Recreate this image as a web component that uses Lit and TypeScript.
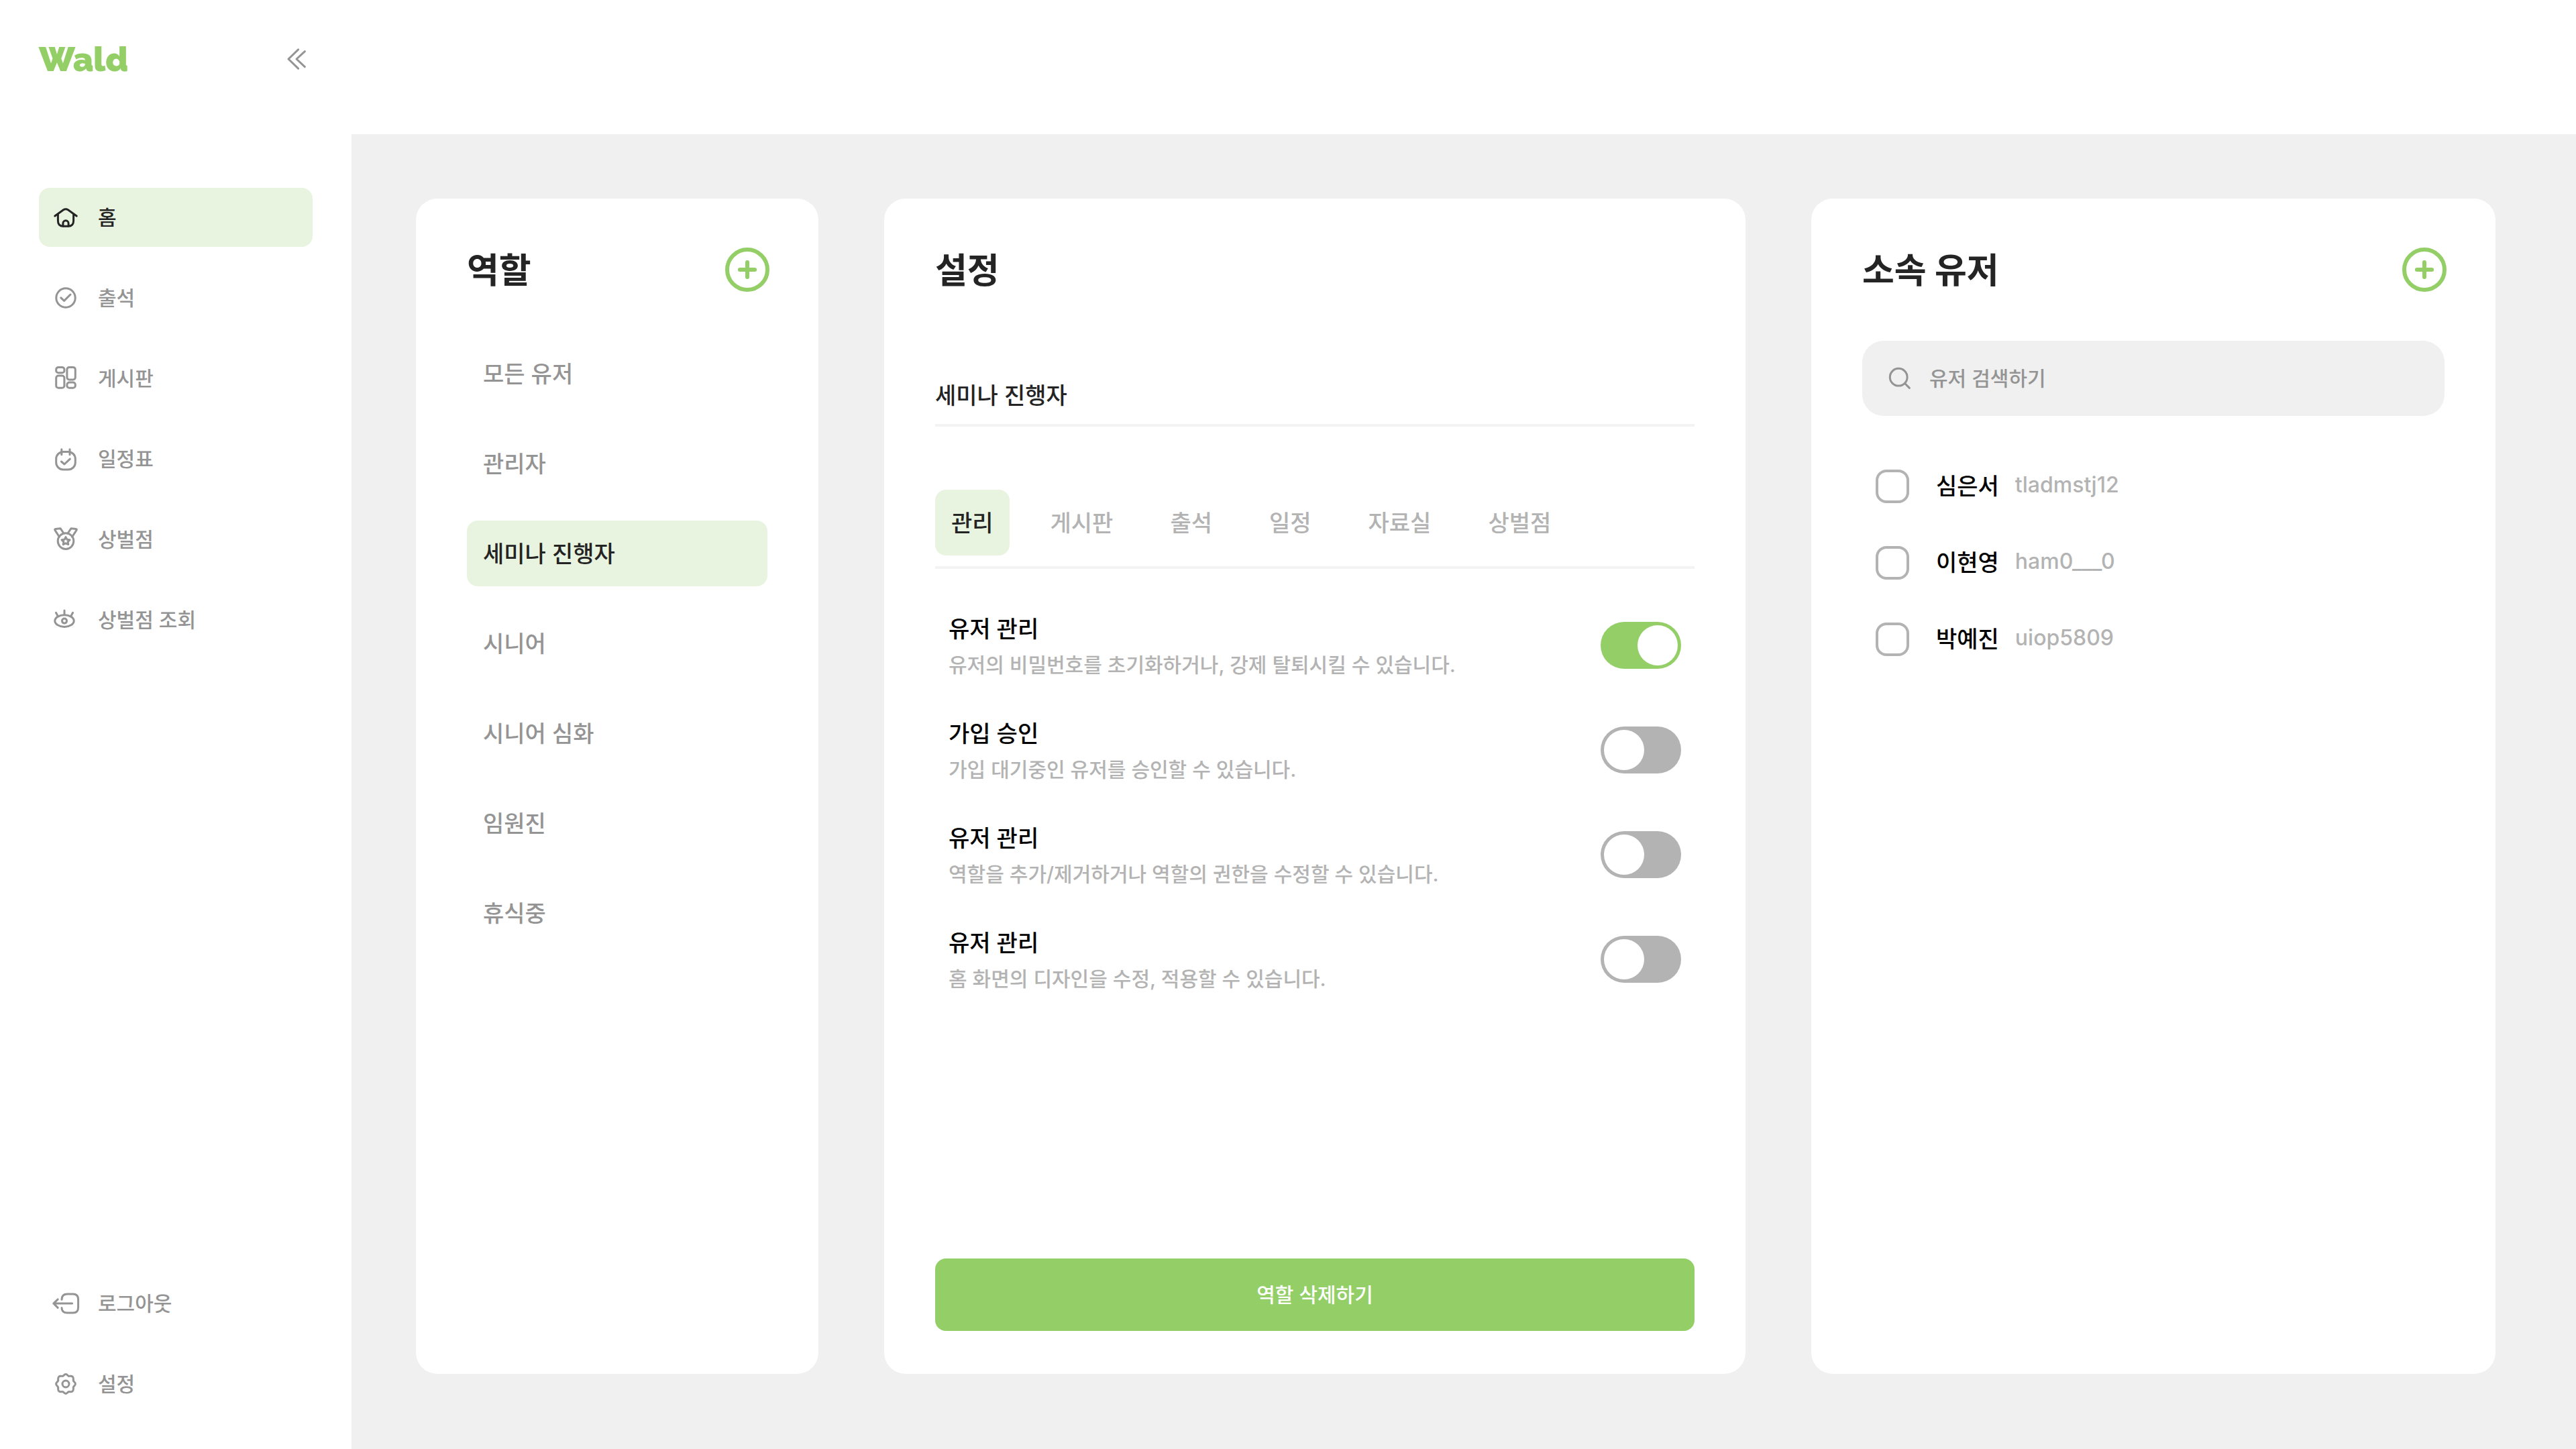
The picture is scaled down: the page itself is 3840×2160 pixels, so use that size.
import { LitElement, html, css, svg, nothing, TemplateResult } from "lit";
import { customElement, property, state } from "lit/decorators.js";
import { classMap } from "lit/directives/class-map.js";

const reset = css`
  *,
  *::before,
  *::after {
    box-sizing: border-box;
  }
  button,
  input {
    margin: 0;
    padding: 0;
    border: 0;
    background: none;
    color: inherit;
    font: inherit;
    outline-offset: 4px;
  }
  button {
    cursor: pointer;
  }
  a {
    color: inherit;
    text-decoration: none;
  }
  ul {
    margin: 0;
    padding: 0;
    list-style: none;
  }
  svg {
    display: block;
    fill: none;
    stroke: currentColor;
    stroke-linecap: round;
    stroke-linejoin: round;
    overflow: visible;
  }
`;

/* Every icon is drawn on a 40 x 40 grid. */
const icons: Record<string, TemplateResult> = {
  home: svg`<path d="M3.8 18 16.6 8.8Q20 6.6 23.4 8.8L36.2 18"/>
    <path d="M8.4 15.5V25.3Q8.4 33.3 16.4 33.3H23.6Q31.6 33.3 31.6 25.3V15.5"/>
    <path d="M15.9 33V28.9a4.1 4.1 0 0 1 8.2 0V33"/>`,
  check: svg`<circle cx="20" cy="20" r="14.2"/><path d="M12.8 19.8 17.6 24.4 27 15"/>`,
  board: svg`<rect x="5.7" y="3.4" width="12.2" height="8.4" rx="3.4"/>
    <rect x="5.7" y="16" width="12.2" height="18.3" rx="3.4"/>
    <rect x="21.9" y="3.4" width="12.4" height="18.6" rx="3.4"/>
    <rect x="21.9" y="26" width="12.4" height="8.3" rx="3.4"/>`,
  calendar: svg`<rect x="5.7" y="9.6" width="28.6" height="26.4" rx="10.5"/>
    <path d="M13.8 5.8V13.8M26 5.8V13.8M13.4 24 18 28 26.4 20.2"/>`,
  medal: svg`<circle cx="20" cy="22.6" r="11.8"/>
    <path d="M10.4 16.2 4 6.4Q3 4.6 5 4.4L12 3.7 17 11M29.6 16.2 36 6.4Q37 4.6 35 4.4L28 3.7 23 11"/>
    <path d="M20 16.6 21.9 20.2 26 20.8 23.1 23.6 23.8 27.6 20 25.8 16.2 27.6 16.9 23.6 14 20.8 18.1 20.2Z"/>`,
  eye: svg`<ellipse cx="18" cy="21.6" rx="14.2" ry="8.8"/><circle cx="18" cy="21.6" r="3.5"/>
    <path d="M18 6V12.6M5.4 9.2 8.3 14.4M30.6 9.2 27.7 14.4"/>`,
  logout: svg`<path d="M14 14.2Q14 6 22.4 6H31Q38.6 6 38.6 14V26Q38.6 34 31 34H22.4Q14 34 14 26.4"/>
    <path d="M29.6 20H1.8M8.2 13.8 1.8 20 8.2 26.4"/>`,
  gear: svg`<circle cx="20" cy="20" r="5"/>
    <path d="M16.9 7.4Q20 3.8 23.1 7.4 24.2 9 26.4 8.2 31.4 7.8 31.4 13 30.8 15.4 32.6 16.9 36.2 20 32.6 23.1 30.8 24.6 31.4 27 31.4 32.2 26.4 31.8 24.2 31 23.1 32.6 20 36.2 16.9 32.6 15.8 31 13.6 31.8 8.6 32.2 8.6 27 9.2 24.6 7.4 23.1 3.8 20 7.4 16.9 9.2 15.4 8.6 13 8.6 7.8 13.6 8.2 15.8 9 16.9 7.4Z"/>`,
  collapse: svg`<path d="M18.6 5.8 4 20 18.6 34.2M28.4 8.6 16 20 28.4 31.6"/>`,
  search: svg`<circle cx="18.2" cy="18.2" r="12.9"/><path d="M27.8 27.8 34.4 34.4"/>`,
  plus: svg`<circle cx="20" cy="20" r="20"/><path d="M12.6 20H27.4M20 12.6V27.4"/>`,
};

interface NavEntry {
  icon: string;
  label: string;
}

@customElement("wald-sidebar")
class WaldSidebar extends LitElement {
  @state() private current = "홈";

  private primary: NavEntry[] = [
    { icon: "home", label: "홈" },
    { icon: "check", label: "출석" },
    { icon: "board", label: "게시판" },
    { icon: "calendar", label: "일정표" },
    { icon: "medal", label: "상벌점" },
    { icon: "eye", label: "상벌점 조회" },
  ];

  private secondary: NavEntry[] = [
    { icon: "logout", label: "로그아웃" },
    { icon: "gear", label: "설정" },
  ];

  static styles = [
    reset,
    css`
      :host {
        display: flex;
        flex-direction: column;
        padding: 36px 58px 53px;
        background: #fff;
      }
      .brand {
        display: flex;
        align-items: center;
        justify-content: space-between;
        height: 104px;
        margin-bottom: 140px;
      }
      .logo {
        color: #93cf66;
        font-family: Raleway, Lato, sans-serif;
        font-size: 51px;
        font-weight: 900;
        line-height: 64px;
      }
      .collapse {
        color: #949494;
      }
      .collapse svg {
        width: 40px;
        height: 40px;
        stroke-width: 3;
      }
      .list {
        display: flex;
        flex-direction: column;
        gap: 32px;
      }
      .bottom {
        margin-top: auto;
      }
      .item {
        display: flex;
        align-items: center;
        gap: 28px;
        height: 88px;
        padding: 0 20px;
        border-radius: 16px;
        color: #949494;
        font-size: 30px;
        font-weight: 500;
      }
      .item svg {
        width: 40px;
        height: 40px;
        stroke-width: 3;
      }
      .current {
        background: #e9f4e0;
        color: #242424;
      }
    `,
  ];

  private renderItem(entry: NavEntry) {
    const current = entry.label === this.current;
    return html`<li>
      <a
        class=${classMap({ item: true, current })}
        href="#"
        aria-current=${current ? "page" : nothing}
        @click=${(e: Event) => {
          e.preventDefault();
          this.current = entry.label;
        }}
      >
        <svg viewBox="0 0 40 40" aria-hidden="true">${icons[entry.icon]}</svg>
        <span>${entry.label}</span>
      </a>
    </li>`;
  }

  render() {
    return html`
      <div class="brand">
        <a class="logo" href="#">Wald</a>
        <button class="collapse" type="button" aria-label="메뉴 접기">
          <svg viewBox="0 0 40 40" aria-hidden="true">${icons.collapse}</svg>
        </button>
      </div>
      <nav>
        <ul class="list">
          ${this.primary.map((entry) => this.renderItem(entry))}
        </ul>
      </nav>
      <ul class="list bottom">
        ${this.secondary.map((entry) => this.renderItem(entry))}
      </ul>
    `;
  }
}

@customElement("wald-card")
class WaldCard extends LitElement {
  @property() heading = "";
  @property() action = "";

  static styles = [
    reset,
    css`
      :host {
        display: flex;
        flex-direction: column;
        min-width: 0;
        padding: 76px 76px 64px;
        border-radius: 32px;
        background: #fff;
      }
      .head {
        display: flex;
        align-items: center;
        justify-content: space-between;
        height: 60px;
        margin-bottom: 76px;
      }
      .title {
        margin: 0;
        padding-top: 4px;
        color: #242424;
        font-size: 52px;
        font-weight: 700;
        line-height: 60px;
      }
      .add {
        border-radius: 50%;
        color: #93cf66;
      }
      .add svg {
        width: 60px;
        height: 60px;
        stroke-width: 4;
      }
    `,
  ];

  render() {
    return html`
      <header class="head">
        <h2 class="title">${this.heading}</h2>
        ${this.action
          ? html`<button class="add" type="button" aria-label=${this.action}>
              <svg viewBox="0 0 40 40" aria-hidden="true">${icons.plus}</svg>
            </button>`
          : nothing}
      </header>
      <slot></slot>
    `;
  }
}

@customElement("app-root")
class AppRoot extends LitElement {
  @state() private role = "세미나 진행자";
  @state() private tab = "관리";

  private roles = ["모든 유저", "관리자", "세미나 진행자", "시니어", "시니어 심화", "임원진", "휴식중"];
  private tabs = ["관리", "게시판", "출석", "일정", "자료실", "상벌점"];
  private permissions = [
    { name: "유저 관리", text: "유저의 비밀번호를 초기화하거나, 강제 탈퇴시킬 수 있습니다.", on: true },
    { name: "가입 승인", text: "가입 대기중인 유저를 승인할 수 있습니다.", on: false },
    { name: "유저 관리", text: "역할을 추가/제거하거나 역할의 권한을 수정할 수 있습니다.", on: false },
    { name: "유저 관리", text: "홈 화면의 디자인을 수정, 적용할 수 있습니다.", on: false },
  ];
  private members = [
    { name: "심은서", id: "tladmstj12" },
    { name: "이현영", id: "ham0___0" },
    { name: "박예진", id: "uiop5809" },
  ];

  static styles = [
    reset,
    css`
      :host {
        display: grid;
        grid-template-columns: 524px minmax(0, 1fr);
        min-height: 100vh;
        background: #fff;
        color: #242424;
        font-family: Inter, "Noto Sans CJK KR", sans-serif;
        font-size: 34px;
        font-weight: 500;
        line-height: 50px;
      }
      .page {
        display: flex;
        flex-direction: column;
      }
      .topbar {
        height: 200px;
      }
      .board {
        flex: 1;
        display: grid;
        grid-template-columns: 50fr 107fr 85fr;
        gap: 98px;
        padding: 96px 120px 112px 96px;
        background: #f0f0f0;
      }

      .roles {
        display: flex;
        flex-direction: column;
        gap: 36px;
      }
      .role,
      .tab {
        height: 98px;
        padding: 2px 24px 0;
        border-radius: 16px;
        text-align: left;
      }
      .role {
        width: 100%;
        color: #949494;
      }
      .tab {
        color: #b3b3b3;
      }
      .selected {
        background: #e9f4e0;
        color: #242424;
      }

      .name {
        width: 100%;
        margin-bottom: 94px;
        padding: 57px 0 17px;
        border-bottom: 4px solid #f3f3f3;
        line-height: 50px;
      }
      .tabs {
        display: flex;
        gap: 37px;
        padding-bottom: 16px;
        border-bottom: 4px solid #f3f3f3;
      }
      .permissions {
        display: flex;
        flex-direction: column;
        gap: 50px;
        padding: 61px 20px;
      }
      .permission {
        display: flex;
        align-items: center;
        justify-content: space-between;
        gap: 40px;
        cursor: pointer;
      }
      .permission-name {
        display: block;
        color: #000;
        line-height: 58px;
      }
      .permission-text {
        display: block;
        color: #b3b3b3;
        font-size: 30px;
        line-height: 48px;
      }
      .switch {
        appearance: none;
        flex: none;
        display: flex;
        width: 120px;
        height: 70px;
        padding: 5px;
        border-radius: 35px;
        background: #b3b3b3;
        cursor: pointer;
      }
      .switch::before {
        content: "";
        width: 60px;
        height: 60px;
        border-radius: 50%;
        background: #fff;
      }
      .switch:checked {
        justify-content: flex-end;
        background: #93cf66;
      }
      .delete {
        height: 108px;
        margin-top: auto;
        border-radius: 16px;
        background: #93cf66;
        color: #fff;
        font-size: 30px;
      }

      .search {
        display: flex;
        align-items: center;
        gap: 24px;
        height: 112px;
        padding: 0 36px;
        border-radius: 32px;
        background: #f0f0f0;
        color: #949494;
        font-size: 30px;
      }
      .search svg {
        flex: none;
        width: 40px;
        height: 40px;
        stroke-width: 3;
      }
      .search-input {
        flex: 1;
        min-width: 0;
      }
      .search-input::placeholder {
        color: #949494;
        opacity: 1;
      }
      .members {
        display: flex;
        flex-direction: column;
        gap: 64px;
        padding: 80px 20px 0;
      }
      .member {
        display: flex;
        align-items: center;
        height: 50px;
        cursor: pointer;
      }
      .tick {
        appearance: none;
        width: 50px;
        height: 50px;
        margin-right: 40px;
        border: 4px solid #b3b3b3;
        border-radius: 16px;
        cursor: pointer;
      }
      .tick:checked {
        border-color: #93cf66;
        background: #93cf66;
      }
      .member-name {
        margin-right: 24px;
        color: #000;
      }
      .member-id {
        padding-bottom: 4px;
        color: #b3b3b3;
        font-size: 32px;
      }
    `,
  ];

  render() {
    return html`
      <wald-sidebar></wald-sidebar>
      <div class="page">
        <header class="topbar"></header>
        <main class="board">
          <wald-card heading="역할" action="역할 추가">
            <ul class="roles">
              ${this.roles.map(
                (role) => html`<li>
                  <button
                    type="button"
                    class=${classMap({ role: true, selected: role === this.role })}
                    aria-pressed=${role === this.role ? "true" : "false"}
                    @click=${() => (this.role = role)}
                  >
                    ${role}
                  </button>
                </li>`,
              )}
            </ul>
          </wald-card>

          <wald-card heading="설정">
            <input class="name" type="text" aria-label="역할 이름" .value=${this.role} />
            <div class="tabs" role="tablist">
              ${this.tabs.map(
                (tab) => html`<button
                  type="button"
                  role="tab"
                  class=${classMap({ tab: true, selected: tab === this.tab })}
                  aria-selected=${tab === this.tab ? "true" : "false"}
                  @click=${() => (this.tab = tab)}
                >
                  ${tab}
                </button>`,
              )}
            </div>
            <div class="permissions">
              ${this.permissions.map(
                (item, i) => html`<label class="permission" for="permission-${i}">
                  <span>
                    <span class="permission-name">${item.name}</span>
                    <span class="permission-text">${item.text}</span>
                  </span>
                  <input class="switch" id="permission-${i}" type="checkbox" role="switch" ?checked=${item.on} />
                </label>`,
              )}
            </div>
            <button class="delete" type="button">역할 삭제하기</button>
          </wald-card>

          <wald-card heading="소속 유저" action="유저 추가">
            <label class="search">
              <svg viewBox="0 0 40 40" aria-hidden="true">${icons.search}</svg>
              <input class="search-input" type="search" aria-label="유저 검색" placeholder="유저 검색하기" />
            </label>
            <ul class="members">
              ${this.members.map(
                (member) => html`<li>
                  <label class="member" for="member-${member.id}">
                    <input class="tick" id="member-${member.id}" type="checkbox" />
                    <span class="member-name">${member.name}</span>
                    <span class="member-id">${member.id}</span>
                  </label>
                </li>`,
              )}
            </ul>
          </wald-card>
        </main>
      </div>
    `;
  }
}
